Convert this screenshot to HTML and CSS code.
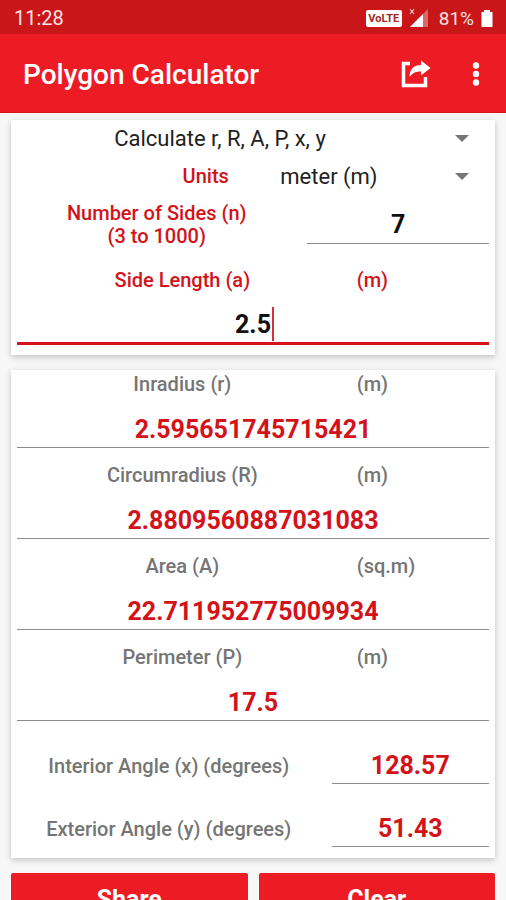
FILE: index.html
```html
<!DOCTYPE html>
<html lang="en">
<head>
    <meta charset="UTF-8">
    <meta name="viewport" content="width=device-width, initial-scale=1">
    <title>Polygon Calculator</title>
    <link rel="stylesheet" href="styles.css">
</head>
<body>
<div class="status-bar">
    <span>11:28</span>
    <div class="status-icons">
        <span class="volte">VoLTE</span>
        <svg class="signal" width="20" height="20" viewBox="0 0 20 20">
            <path d="M1 1l4 5M5 1l-4 5" stroke="#fff" stroke-width="1" fill="none"/>
            <path d="M19 1v18H1z" fill="#fff" opacity=".35"/>
            <path d="M14 6v13H1z" fill="#fff"/>
        </svg>
        <span class="percent">81%</span>
        <svg class="battery" width="12" height="18" viewBox="0 0 12 18">
            <path d="M3 1h6v2h2.500v15H.5V3H3z" fill="#fff"/>
        </svg>
    </div>
</div>

<header class="toolbar">
    <h1>Polygon Calculator</h1>
    <button class="icon-btn" type="button" aria-label="Share result">
        <svg width="32" height="30" viewBox="0 0 32 30">
            <path d="M10 4.500H3.500v22h22V18" fill="none" stroke="#fff" stroke-width="3.500"/>
            <path d="M21 1.500l9.500 7.500-9.500 7.500v-4c-5 0-8 1-11.500 5.500 0-8 4.500-12 11.500-12z" fill="#fff"/>
        </svg>
    </button>
    <button class="icon-btn menu-btn" type="button" aria-label="More options">
        <svg width="8" height="24" viewBox="0 0 8 24">
            <circle cx="4" cy="3.500" r="3.200" fill="#fff"/>
            <circle cx="4" cy="12" r="3.200" fill="#fff"/>
            <circle cx="4" cy="20.500" r="3.200" fill="#fff"/>
        </svg>
    </button>
</header>

<main>
    <section class="card">
        <div class="select-box">
            <select aria-label="Calculation">
                <option>Calculate r, R, A, P, x, y</option>
            </select>
        </div>
        <div class="row row-units">
            <label for="units">Units</label>
            <div class="select-box">
                <select id="units">
                    <option>meter (m)</option>
                </select>
            </div>
        </div>
        <div class="row row-sides">
            <label for="sides">Number of Sides (n)<br>(3 to 1000)</label>
            <input id="sides" type="text" value="7">
        </div>
        <div class="row row-label">
            <label for="side-length">Side Length (a)</label>
            <span>(m)</span>
        </div>
        <div class="active-field">
            <input id="side-length" type="text" value="2.5">
            <span class="caret"></span>
        </div>
    </section>

    <section class="card results">
        <div class="row row-label">
            <label for="inradius">Inradius (r)</label>
            <span>(m)</span>
        </div>
        <input id="inradius" type="text" value="2.595651745715421" readonly>
        <div class="row row-label">
            <label for="circumradius">Circumradius (R)</label>
            <span>(m)</span>
        </div>
        <input id="circumradius" type="text" value="2.8809560887031083" readonly>
        <div class="row row-label">
            <label for="area">Area (A)</label>
            <span>(sq.m)</span>
        </div>
        <input id="area" type="text" value="22.711952775009934" readonly>
        <div class="row row-label">
            <label for="perimeter">Perimeter (P)</label>
            <span>(m)</span>
        </div>
        <input id="perimeter" type="text" value="17.5" readonly>
        <div class="row row-angle">
            <label for="interior">Interior Angle (x) (degrees)</label>
            <input id="interior" type="text" value="128.57" readonly>
        </div>
        <div class="row row-angle">
            <label for="exterior">Exterior Angle (y) (degrees)</label>
            <input id="exterior" type="text" value="51.43" readonly>
        </div>
    </section>

    <div class="actions">
        <button type="button">Share</button>
        <button type="button">Clear</button>
    </div>
</main>
</body>
</html>
```
FILE: styles.css
```css
* {
    box-sizing: border-box;
}
body {
    display: flex;
    flex-direction: column;
    height: 100vh;
    margin: 0;
    background: #f7f7f7;
    color: #111;
    font-family: Roboto, "Liberation Sans", sans-serif;
    font-size: 20px;
    font-weight: 500;
}
button, input, select {
    margin: 0;
    padding: 0;
    border: 0;
    border-radius: 0;
    outline: 0;
    background: none;
    color: inherit;
    font: inherit;
}

/* status bar */
.status-bar {
    display: flex;
    flex: none;
    align-items: center;
    justify-content: space-between;
    height: 34px;
    padding: 2px 13px 0 14px;
    background: #c91619;
    color: #fbe4e4;
    font-weight: 400;
}
.status-icons {
    display: flex;
    align-items: center;
}
.volte {
    width: 36px;
    border-radius: 2px;
    background: #fff;
    color: #a3282b;
    font-size: 11px;
    font-weight: 700;
    line-height: 17px;
    text-align: center;
}
.signal {
    margin-left: 7px;
}
.percent {
    margin: 0 7px 0 10px;
    font-size: 19px;
}

/* toolbar */
.toolbar {
    display: flex;
    flex: none;
    align-items: center;
    height: 79px;
    padding: 2px 26px 0 23px;
    border-bottom: 1px solid #d8141a;
    background: #ed1c24;
    color: #fff;
}
h1 {
    flex: 1;
    margin: 0;
    font-size: 28px;
    font-weight: 500;
}
.icon-btn {
    display: flex;
}
.menu-btn {
    margin-left: 40px;
}

main {
    flex: 1;
    min-height: 0;
    padding: 7px 11px 15px;
    overflow-y: auto;
    scrollbar-width: none;
}
.card {
    margin-bottom: 15px;
    padding: 0 6px 10px;
    background: #fff;
    box-shadow: 0 2px 6px rgba(0, 0, 0, .22);
    color: #d3121a;
}
.row {
    display: grid;
    align-items: center;
    column-gap: 11px;
    text-align: center;
}
input {
    display: block;
    width: 100%;
    min-width: 0;
    height: 38px;
    border-bottom: 1px solid #8c8c8c;
    color: #111;
    font-size: 25px;
    font-weight: 700;
    text-align: center;
}

/* drop-downs */
.select-box {
    display: grid;
    align-items: center;
    height: 36px;
}
.select-box select {
    grid-area: 1 / 1;
    width: 100%;
    height: 36px;
    padding-right: 66px;
    appearance: none;
    color: #222;
    font-size: 22px;
    font-weight: 400;
    text-align: center;
    text-align-last: center;
}
.select-box::after {
    content: "";
    grid-area: 1 / 1;
    justify-self: end;
    margin-right: 20px;
    border: 7px solid transparent;
    border-top-color: #757575;
    border-bottom: 0;
    pointer-events: none;
}

.row-units {
    grid-template-columns: 6fr 7fr;
    column-gap: 0;
    height: 40px;
}
.row-units label {
    padding-right: 6px;
    text-align: right;
}
.row-sides {
    grid-template-columns: 20fr 13fr;
    height: 57px;
    line-height: 23px;
}
.row-label {
    grid-template-columns: 5fr 2fr;
    column-gap: 9px;
    height: 53px;
}
.row-label span {
    text-align: left;
}
.active-field {
    position: relative;
}
.active-field input {
    height: 39px;
    border-bottom: 3px solid #d3121a;
}
.caret {
    position: absolute;
    top: 1px;
    left: 50%;
    width: 2px;
    height: 34px;
    margin-left: 19px;
    background: #d3323a;
}

/* results */
.results {
    padding-bottom: 11px;
}
.results label, .results span {
    color: #757575;
}
.results .row-label {
    height: 28px;
    margin-bottom: 13px;
}
.results input {
    height: 37px;
    margin-bottom: 13px;
    color: #d3121a;
}
.results .row-angle {
    grid-template-columns: 27fr 14fr;
    margin-top: 26px;
}
.results .row-angle input {
    margin-bottom: 0;
}

.actions {
    display: grid;
    grid-template-columns: 1fr 1fr;
    gap: 11px;
}
.actions button {
    height: 52px;
    border-radius: 2px;
    background: #ed1c24;
    color: #fff;
    font-size: 25px;
    font-weight: 700;
}
```
